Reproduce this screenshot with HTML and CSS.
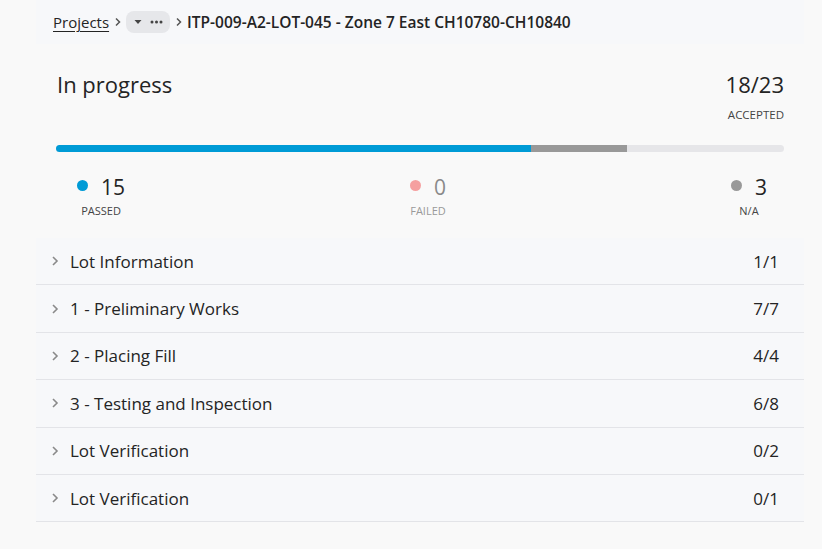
FILE: index.html
```html
<!DOCTYPE html>
<html lang="en">
<head>
<meta charset="utf-8">
<title>ITP-009-A2-LOT-045</title>
<link rel="stylesheet" href="styles.css">
</head>
<body>
<div class="page">
  <nav class="crumbs">
    <a class="crumb-link" href="#">Projects</a>
    <svg class="sep" width="8" height="10" viewBox="0 0 8 10"><path d="M2 1.5 L5.5 5 L2 8.5" fill="none" stroke="#555" stroke-width="1.5"/></svg>
    <span class="pill">
      <svg width="8" height="6" viewBox="0 0 8 6"><path d="M0.5 1 L7.5 1 L4 5 Z" fill="#444"/></svg>
      <svg width="13" height="4" viewBox="0 0 13 4"><circle cx="2" cy="2" r="1.5" fill="#444"/><circle cx="6.5" cy="2" r="1.5" fill="#444"/><circle cx="11" cy="2" r="1.5" fill="#444"/></svg>
    </span>
    <svg class="sep" width="8" height="10" viewBox="0 0 8 10"><path d="M2 1.5 L5.5 5 L2 8.5" fill="none" stroke="#555" stroke-width="1.5"/></svg>
    <span class="crumb-title">ITP-009-A2-LOT-045 - Zone 7 East CH10780-CH10840</span>
  </nav>

  <section class="summary">
    <div class="head">
      <div class="status">In progress</div>
      <div class="accepted">
        <div class="big">18/23</div>
        <div class="small">ACCEPTED</div>
      </div>
    </div>
    <div class="bar">
      <div class="seg seg-pass" style="width:65.3%"></div>
      <div class="seg seg-na" style="width:13.1%"></div>
    </div>
    <div class="stats">
      <div class="stat">
        <div class="stat-top"><span class="dot dot-pass"></span><span class="num">15</span></div>
        <div class="lbl">PASSED</div>
      </div>
      <div class="stat muted">
        <div class="stat-top"><span class="dot dot-fail"></span><span class="num">0</span></div>
        <div class="lbl">FAILED</div>
      </div>
      <div class="stat">
        <div class="stat-top"><span class="dot dot-na"></span><span class="num">3</span></div>
        <div class="lbl">N/A</div>
      </div>
    </div>
  </section>

  <ul class="rows">
    <li class="row"><svg class="chev" width="8" height="12" viewBox="0 0 8 12"><path d="M2 2 L6 6 L2 10" fill="none" stroke="#8a8a8a" stroke-width="1.6"/></svg><span class="name">Lot Information</span><span class="count">1/1</span></li>
    <li class="row"><svg class="chev" width="8" height="12" viewBox="0 0 8 12"><path d="M2 2 L6 6 L2 10" fill="none" stroke="#8a8a8a" stroke-width="1.6"/></svg><span class="name">1 - Preliminary Works</span><span class="count">7/7</span></li>
    <li class="row"><svg class="chev" width="8" height="12" viewBox="0 0 8 12"><path d="M2 2 L6 6 L2 10" fill="none" stroke="#8a8a8a" stroke-width="1.6"/></svg><span class="name">2 - Placing Fill</span><span class="count">4/4</span></li>
    <li class="row"><svg class="chev" width="8" height="12" viewBox="0 0 8 12"><path d="M2 2 L6 6 L2 10" fill="none" stroke="#8a8a8a" stroke-width="1.6"/></svg><span class="name">3 - Testing and Inspection</span><span class="count">6/8</span></li>
    <li class="row"><svg class="chev" width="8" height="12" viewBox="0 0 8 12"><path d="M2 2 L6 6 L2 10" fill="none" stroke="#8a8a8a" stroke-width="1.6"/></svg><span class="name">Lot Verification</span><span class="count">0/2</span></li>
    <li class="row"><svg class="chev" width="8" height="12" viewBox="0 0 8 12"><path d="M2 2 L6 6 L2 10" fill="none" stroke="#8a8a8a" stroke-width="1.6"/></svg><span class="name">Lot Verification</span><span class="count">0/1</span></li>
  </ul>
</div>
</body>
</html>
```
FILE: styles.css
```css
* { box-sizing: border-box; }
html, body { margin: 0; padding: 0; }
body {
  background: #f9f9f9;
  font-family: "Open Sans", "Noto Sans", "Liberation Sans", sans-serif;
  color: #242424;
}
.page {
  margin: 0 18px 0 36px;
  width: 768px;
}
.crumbs {
  height: 44px;
  background: #f7f8fa;
  display: flex;
  align-items: center;
  padding: 0 0 0 17px;
  font-size: 15px;
}
.crumb-link {
  color: #242424;
  text-decoration: underline;
  text-underline-offset: 3px;
}
.sep { margin: 0 4px 0 5px; }
.pill {
  display: inline-flex;
  align-items: center;
  gap: 8px;
  height: 22px;
  padding: 0 7px 0 8px;
  border-radius: 8px;
  background: #e6e7ea;
}
.crumb-title { font-weight: 600; font-size: 15.5px; margin-left: 0; }

.summary { padding: 26px 20px 0 20px; }
.head {
  display: flex;
  justify-content: space-between;
  align-items: flex-start;
}
.status { font-size: 22px; line-height: 28px; padding-left: 1px; }
.accepted { text-align: right; }
.big { font-size: 22px; line-height: 28px; }
.small { font-size: 11.5px; line-height: 14px; margin-top: 10px; color: #444; }
.bar {
  margin-top: 23px;
  height: 7px;
  border-radius: 4px;
  background: #e6e6e9;
  display: flex;
  overflow: hidden;
}
.seg { height: 100%; }
.seg-pass { background: #009bd6; }
.seg-na { background: #999999; }

.stats {
  display: flex;
  justify-content: space-between;
  padding: 0 17px 0 21px;
  margin-top: 23px;
}
.stat { display: flex; flex-direction: column; align-items: center; }
.stat-top { display: flex; align-items: flex-start; }
.dot {
  width: 11px; height: 11px; border-radius: 50%;
  margin: 5px 13px 0 0;
}
.dot-pass { background: #009bd6; }
.dot-fail { background: #f5a0a0; }
.dot-na { background: #999999; }
.num { font-size: 21px; line-height: 24px; }
.lbl { font-size: 11px; line-height: 14px; margin-top: 5px; color: #444; }
.muted .num { color: #8a8a8a; }
.muted .lbl { color: #9a9a9a; }

.rows {
  list-style: none;
  margin: 20px 0 0 0;
  padding: 0;
  background: #f7f8fa;
}
.row {
  display: flex;
  align-items: center;
  height: 47.4px;
  border-bottom: 1px solid #e3e4e8;
  padding: 0 25px 0 15px;
  font-size: 17px;
}
.chev { flex: none; margin-right: 11px; }
.name { flex: 1; }
.count { color: #242424; }
```
